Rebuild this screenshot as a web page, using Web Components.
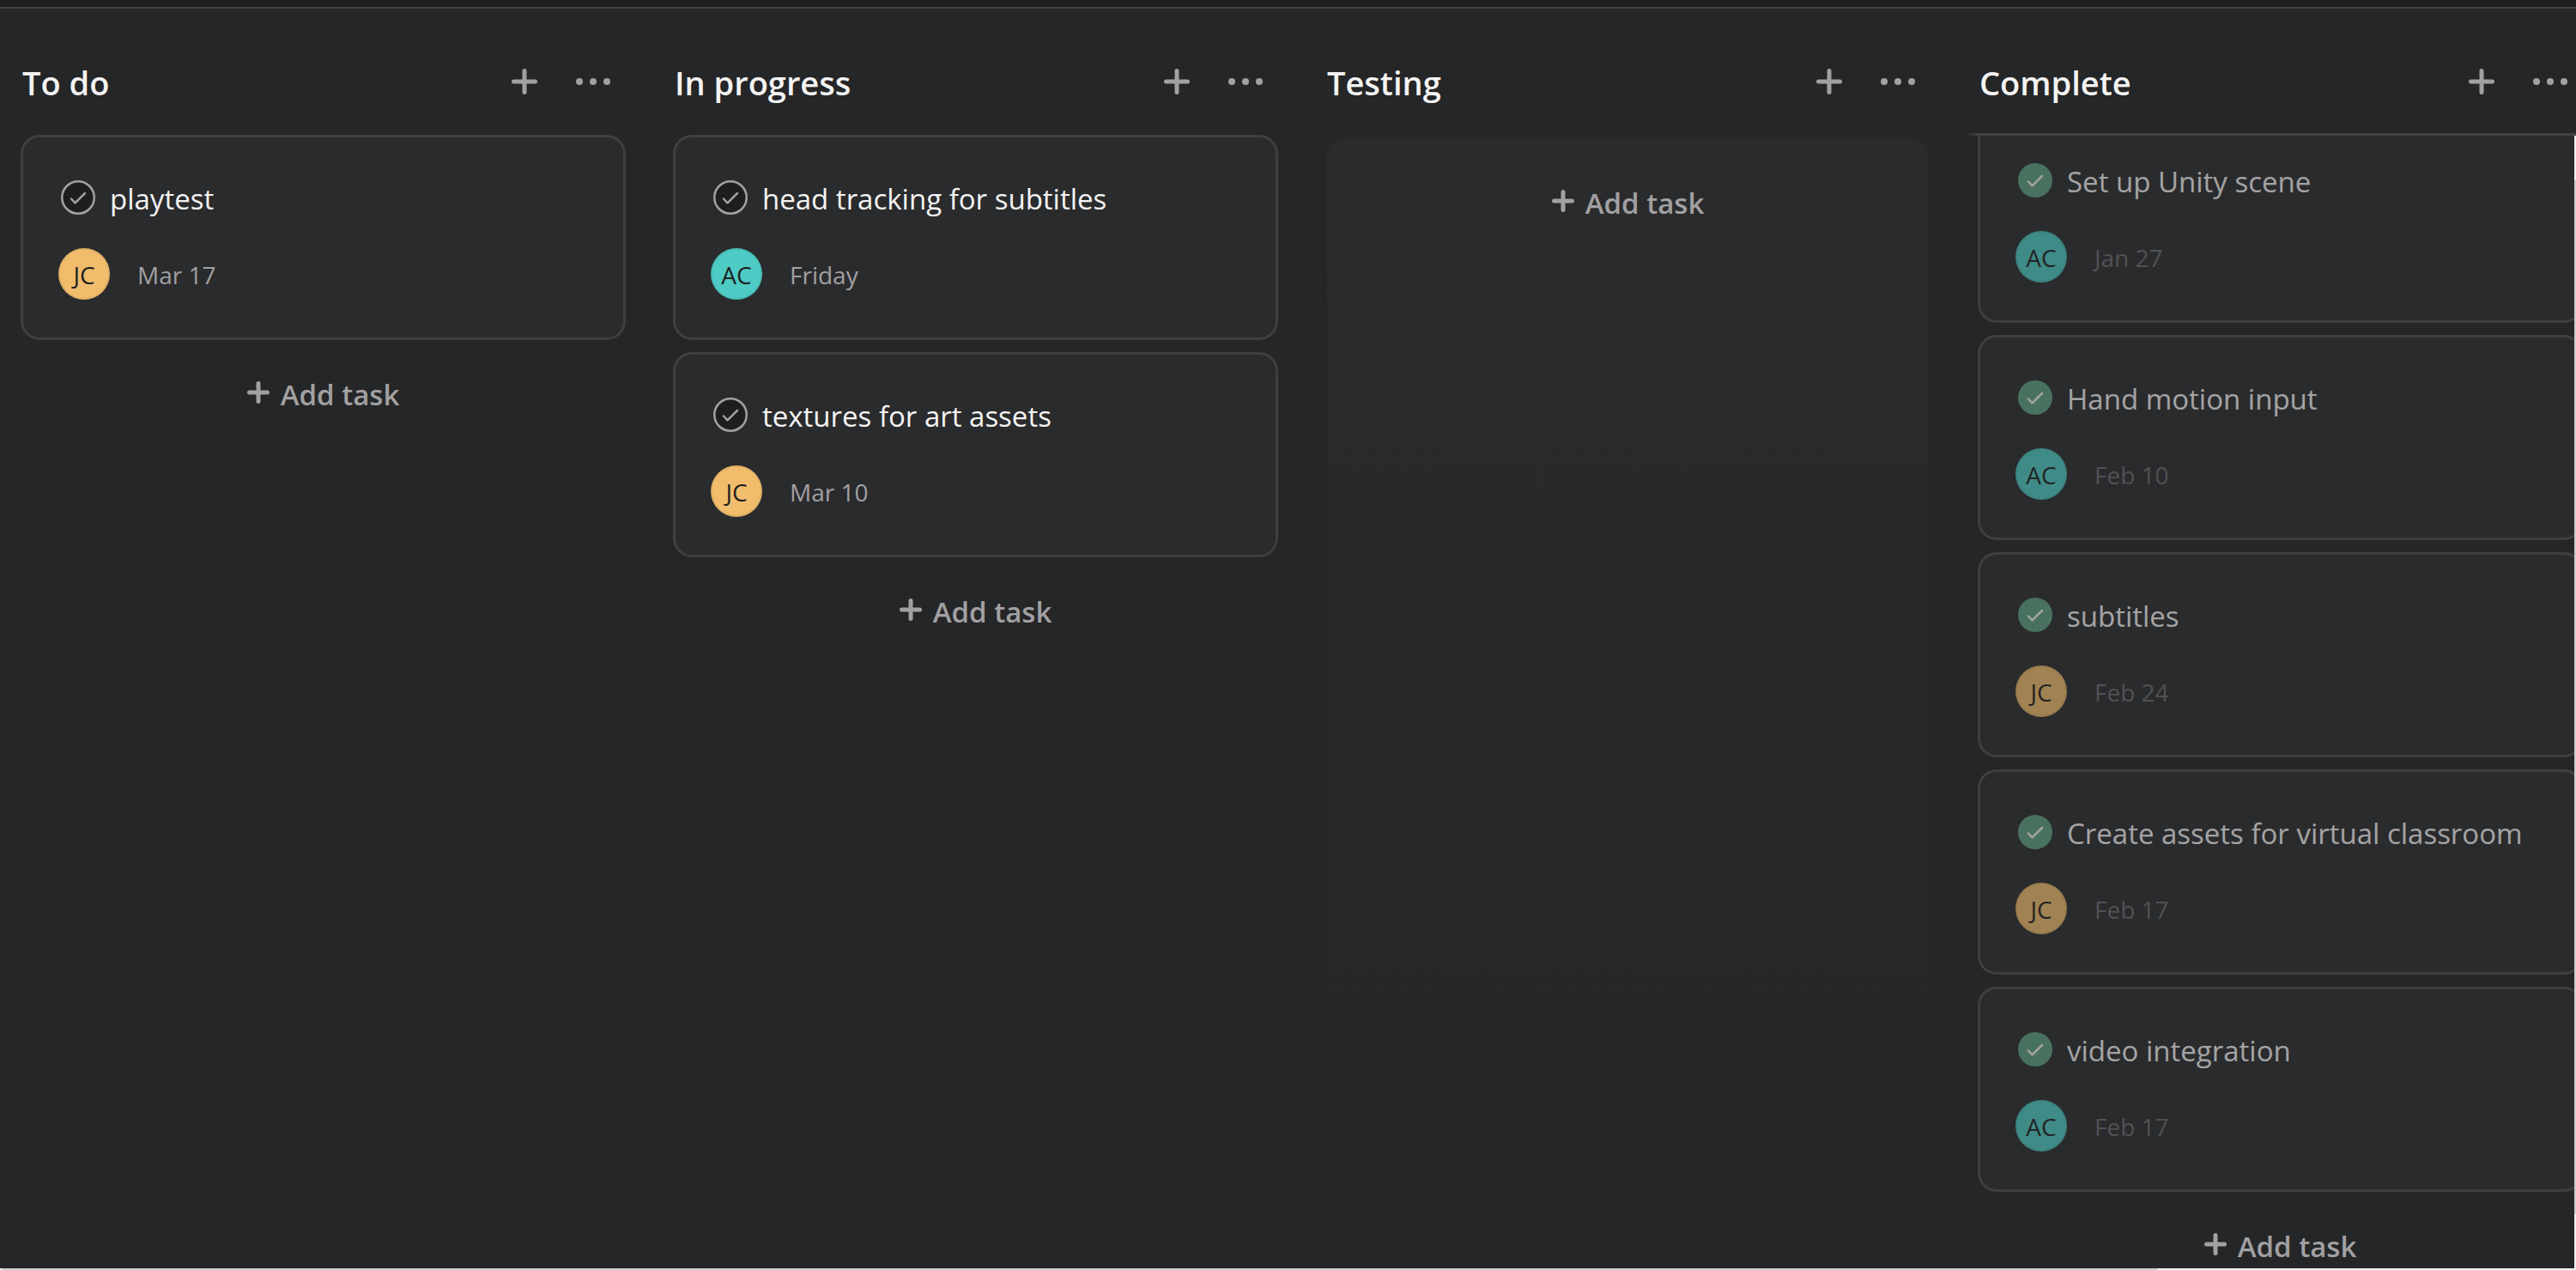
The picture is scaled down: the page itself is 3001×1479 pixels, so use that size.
<!DOCTYPE html>
<html lang="en">
<head>
<meta charset="utf-8">
<title>Board</title>
<style>
html, body { height: 100%; margin: 0; }
body { background: #252628; color: #f5f4f3; font-family: "Open Sans", "Segoe UI", "Noto Sans", sans-serif; overflow: hidden; }
</style>
</head>
<body>
<board-view>
  <board-column name="To do">
    <task-card who="JC" due="Mar 17">playtest</task-card>
  </board-column>
  <board-column name="In progress">
    <task-card who="AC" due="Friday">head tracking for subtitles</task-card>
    <task-card who="JC" due="Mar 10">textures for art assets</task-card>
  </board-column>
  <board-column name="Testing" empty></board-column>
  <board-column name="Complete" scrolled>
    <task-card done who="AC" due="Jan 27">Set up Unity scene</task-card>
    <task-card done who="AC" due="Feb 10">Hand motion input</task-card>
    <task-card done who="JC" due="Feb 24">subtitles</task-card>
    <task-card done who="JC" due="Feb 17">Create assets for virtual classroom</task-card>
    <task-card done who="AC" due="Feb 17">video integration</task-card>
  </board-column>
</board-view>

<template id="board-view">
  <style>
    :host { display: flex; flex-direction: column; height: 100vh; position: relative; overflow: hidden; }
    .edge { flex: none; height: 8px; background: #1e1f21; border-bottom: 2px solid #424244; }
    .columns { flex: 1; min-height: 0; display: flex; gap: 55px; padding-left: 24px; overflow: hidden; }
    .bar { position: absolute; background: #f0f0f0; }
    .bar i { position: absolute; background: #cdcdcd; }
    .h { left: 0; right: 0; bottom: 0; height: 2px; }
    .h i { left: 3px; width: 2510px; top: 0; bottom: 0; }
    .v { right: 0; top: 158px; bottom: 0; width: 2px; }
    .v i { top: 52px; bottom: 65px; left: 0; right: 0; }
  </style>
  <div class="edge"></div>
  <div class="columns"><slot></slot></div>
  <div class="bar v"><i></i></div>
  <div class="bar h"><i></i></div>
</template>

<template id="board-column">
  <style>
    :host { display: flex; flex-direction: column; flex: none; width: 705px; min-height: 0; position: relative; }
    header { flex: none; display: flex; align-items: center; height: 54px; padding: 58px 8px 35px 2px; }
    h2 { flex: 1; margin: 0; padding-top: 2px; font-size: 38px; line-height: 54px; font-weight: 600; white-space: nowrap; }
    button { display: flex; align-items: center; justify-content: center; padding: 0; border: 0; background: none; color: #a2a0a2; font: inherit; cursor: pointer; }
    header button { width: 60px; height: 60px; }
    header button + button { margin-left: 20px; }
    svg { display: block; fill: currentColor; }
    .list { flex: 1; min-height: 0; display: flex; flex-direction: column; gap: 14px; overflow: hidden; }
    .add { flex: none; gap: 13px; height: 90px; margin-top: 4px; font-size: 33px; line-height: 48px; font-weight: 600; }
    .add svg { margin-top: -4px; }
    .add span { padding-top: 2px; }
    :host([empty]) .list { margin: 3px 2px 0; border-radius: 22px 22px 0 0; background: linear-gradient(#2a2b2d, #252628); }
    :host([empty]) .add { margin-top: 31px; }
    .rule { display: none; }
    :host([scrolled]) .rule { display: block; position: absolute; z-index: 1; top: 145px; left: -16px; right: 0; height: 3px; background: linear-gradient(90deg, transparent, #424244 16px); }
  </style>
  <header>
    <h2></h2>
    <button type="button" aria-label="Add task to section"><svg width="30" height="30" viewBox="0 0 30 30"><path d="M15 2.5v25M2.5 15h25" stroke="currentColor" stroke-width="5" stroke-linecap="round"/></svg></button>
    <button type="button" aria-label="More actions"><svg width="40" height="8" viewBox="0 0 40 8"><circle cx="4" cy="4" r="4"/><circle cx="20" cy="4" r="4"/><circle cx="36" cy="4" r="4"/></svg></button>
  </header>
  <div class="rule"></div>
  <div class="list">
    <slot></slot>
    <button type="button" class="add"><svg width="26" height="26" viewBox="0 0 26 26"><path d="M13 2.5v21M2.5 13h21" stroke="currentColor" stroke-width="5" stroke-linecap="round"/></svg><span>Add task</span></button>
  </div>
</template>

<template id="task-card">
  <style>
    :host { display: block; flex: none; box-sizing: border-box; border: 3px solid #3e3f41; border-radius: 22px; background: #2a2b2d; padding: 44px 41px; }
    .content { display: flex; flex-direction: column; gap: 33px; }
    .row { display: flex; align-items: center; }
    .title { height: 52px; padding-left: 3px; gap: 17px; font-size: 33px; line-height: 52px; white-space: nowrap; }
    .name { padding-top: 3px; }
    .check { display: block; flex: none; padding: 0; border: 0; background: none; cursor: pointer; }
    .check svg { display: block; }
    .circle { fill: #1d1e20; stroke: #a2a0a2; stroke-width: 2.5; }
    .tick { fill: none; stroke: #a2a0a2; stroke-width: 2.5; stroke-linecap: round; stroke-linejoin: round; }
    .meta { gap: 32px; height: 60px; font-size: 28px; line-height: 42px; color: #a2a0a2; }
    .due { padding-top: 2px; }
    .who { flex: none; box-sizing: border-box; width: 60px; height: 60px; border-radius: 50%; border: 2px solid #0000000f; background: #f1bd6c; color: #1e1f21; text-align: center; line-height: 58px; }
    :host([who="AC"]) .who { background: #4ecbc4; }
    :host([done]) .content { opacity: .6; }
    :host([done]) .circle { fill: #5ea181; stroke: none; }
    :host([done]) .tick { stroke: #f5f4f3; }
    :host([done]) .due { color: #6a6b6d; }
  </style>
  <div class="content">
    <div class="row title">
      <button type="button" class="check" aria-label="Mark complete"><svg width="40" height="40" viewBox="0 0 40 40"><circle class="circle" cx="20" cy="20" r="18.75"/><path class="tick" d="M12 21.5l4.5 4.8L28 15"/></svg></button>
      <span class="name"><slot></slot></span>
    </div>
    <div class="row meta"><span class="who"></span><span class="due"></span></div>
  </div>
</template>

<script>
class ShadowElement extends HTMLElement {
  constructor() {
    super();
    this.attachShadow({ mode: 'open' })
      .append(document.getElementById(this.localName).content.cloneNode(true));
  }
}
customElements.define('board-view', class extends ShadowElement {});
customElements.define('task-card', class extends ShadowElement {
  connectedCallback() {
    this.shadowRoot.querySelector('.who').textContent = this.getAttribute('who');
    this.shadowRoot.querySelector('.due').textContent = this.getAttribute('due');
    if (this.hasAttribute('done')) this.shadowRoot.querySelector('.circle').setAttribute('r', 20);
  }
});
// Defined after the cards, so that the list has its full height when it is scrolled.
customElements.define('board-column', class extends ShadowElement {
  connectedCallback() {
    this.shadowRoot.querySelector('h2').textContent = this.getAttribute('name');
    if (this.hasAttribute('scrolled')) this.shadowRoot.querySelector('.list').scrollTop = 20;
  }
});
</script>
</body>
</html>
